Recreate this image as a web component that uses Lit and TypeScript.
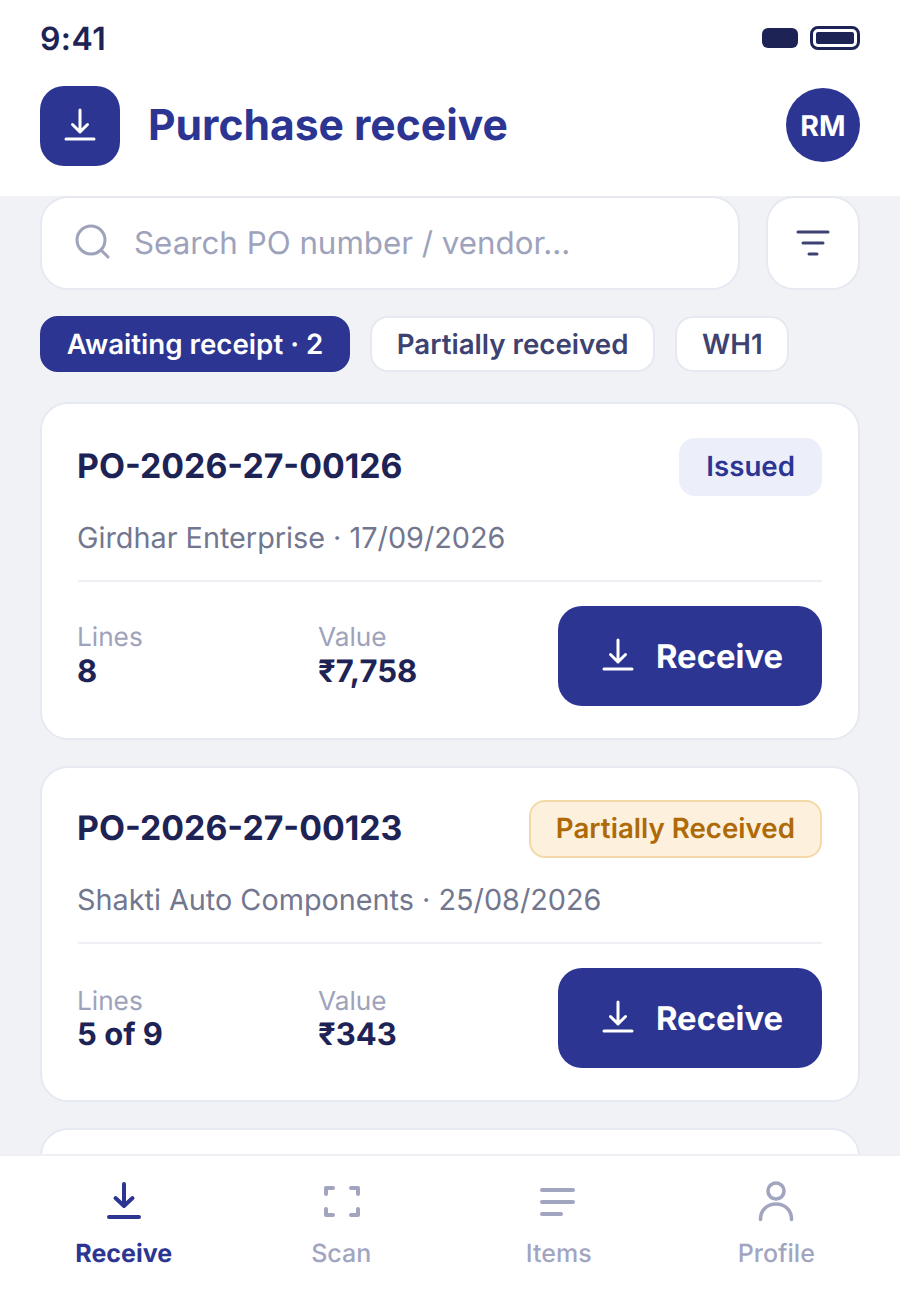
import { LitElement, html, css, svg } from "lit";
import { customElement } from "lit/decorators.js";

const dl = svg`<path d="M18 2V24M10.5 16.5L18 24L25.5 16.5M4 31H32" fill="none" stroke="currentColor" stroke-width="3" stroke-linecap="round" stroke-linejoin="round"/>`;

interface Po { id: string; status: string; tone: string; sub: string; lines: string; value: string }
const pos: Po[] = [
  { id: "PO-2026-27-00126", status: "Issued", tone: "issued", sub: "Girdhar Enterprise · 17/09/2026", lines: "8", value: "₹7,758" },
  { id: "PO-2026-27-00123", status: "Partially Received", tone: "partial", sub: "Shakti Auto Components · 25/08/2026", lines: "5 of 9", value: "₹343" },
];

@customElement("app-root")
export class AppRoot extends LitElement {
  static styles = css`
    :host { display: flex; flex-direction: column; width: 900px; height: 1300px; overflow: hidden; background: #fff; font-family: Inter, "Liberation Sans", sans-serif; color: #1e2356; text-rendering: geometricPrecision; }
    * { box-sizing: border-box; }
    svg { display: block; flex: none; }
    .status { height: 76px; padding: 0 40px; display: flex; align-items: center; justify-content: space-between; }
    .time { font-size: 32px; font-weight: 600; letter-spacing: 0.4px; }
    .status-r { display: flex; align-items: center; gap: 12px; }
    .sig { width: 36px; height: 20px; border-radius: 6px; background: #1e2356; }
    .bat { width: 50px; height: 24px; border: 3px solid #1e2356; border-radius: 8px; padding: 3px; }
    .bat i { display: block; height: 100%; background: #1e2356; border-radius: 2px; }
    .head { height: 120px; padding: 10px 40px 30px; display: flex; align-items: center; gap: 28px; }
    .logo { width: 80px; height: 80px; border-radius: 24px; background: #2c3592; color: #fff; display: flex; align-items: center; justify-content: center; }
    .logo svg { margin-left: -1px; }
    h1 { margin: -1px 0 0; flex: 1; font-size: 42.6px; font-weight: 700; color: #2c3592; }
    .avatar { width: 74px; height: 74px; margin-top: -2px; border-radius: 50%; background: #2c3592; color: #fff; font-size: 28.5px; font-weight: 700; display: flex; align-items: center; justify-content: center; }
    main { flex: 1; min-height: 0; overflow: hidden; background: #f0f2f6; padding: 0 40px; display: flex; flex-direction: column; }
    .search-row { display: flex; gap: 26px; flex: none; }
    .search { width: 700px; height: 94px; background: #fff; border: 2px solid #e7e9f2; border-radius: 28px; padding: 0 32px 0 33px; display: flex; align-items: center; gap: 23px; font-size: 31.3px; color: #9ea2bb; }
    .search svg { margin-top: -2px; }
    .filter { width: 94px; height: 94px; background: #fff; border: 2px solid #e7e9f2; border-radius: 28px; display: flex; align-items: center; justify-content: center; color: #3d4270; }
    .chips { display: flex; gap: 20px; margin-top: 26px; flex: none; }
    .chip { height: 56px; padding: 0 24.75px; border-radius: 18px; background: #fff; border: 2px solid #e7e9f2; color: #3d4270; font-size: 27.7px; font-weight: 600; display: flex; align-items: center; }
    .chip.on { background: #2c3592; border-color: #2c3592; color: #fff; }
    .card { flex: none; background: #fff; border: 2px solid #e7e9f2; border-radius: 28px; padding: 34px 36px 32px; margin-top: 26px; height: 338px; }
    .chips + .card { margin-top: 30px; }
    .card.second { height: 336px; padding-top: 32px; }
    .top { display: flex; align-items: center; justify-content: space-between; height: 58px; }
    .id { font-size: 33.8px; font-weight: 700; margin: -2px 0 0 -1px; }
    .badge { height: 58px; padding: 0 25px 2px; border-radius: 16px; font-size: 27.7px; font-weight: 600; display: flex; align-items: center; border: 2px solid transparent; }
    .issued { background: #eceffa; color: #2c3592; }
    .partial { background: #fdf1dd; color: #ae6a07; border-color: #f3d9a8; }
    .sub { margin: 22px 0 0 -1px; font-size: 28.8px; line-height: 40px; color: #72778f; }
    .rule { height: 2px; background: #eef0f6; margin-top: 22px; }
    .bottom { display: flex; align-items: center; margin-top: 24px; }
    .col { width: 241px; padding-top: 1px; }
    .col:first-child { width: 242px; margin-left: -1px; }
    .second .col { padding-top: 4px; }
    .label { font-size: 26.2px; line-height: 30px; color: #9ea2bb; }
    .num { font-size: 31px; font-weight: 700; line-height: 36px; margin-top: 1px; }
    .second .num { margin-top: 0; }
    .btn { margin-left: auto; width: 264px; height: 100px; padding-left: 3px; border-radius: 24px; background: #2c3592; color: #fff; display: flex; align-items: center; justify-content: center; gap: 20px; font-size: 32.8px; font-weight: 700; flex: none; }
    .tabs { flex: none; height: 146px; background: #fff; border-top: 2px solid #eef0f6; padding: 0 15px; display: grid; grid-template-columns: repeat(4, 1fr); }
    .tab { display: flex; flex-direction: column; align-items: center; padding-top: 24px; color: #a2a5bf; font-size: 25px; font-weight: 500; }
    .tab svg { width: 44px; height: 44px; }
    .tab span { margin-top: 15px; line-height: 30px; }
    .tab.on { color: #2c3592; font-weight: 700; }
  `;

  private card(p: Po, second: boolean) {
    return html`<section class="card ${second ? "second" : ""}">
      <div class="top"><div class="id">${p.id}</div><div class="badge ${p.tone}">${p.status}</div></div>
      <div class="sub">${p.sub}</div>
      <div class="rule"></div>
      <div class="bottom">
        <div class="col"><div class="label">Lines</div><div class="num">${p.lines}</div></div>
        <div class="col"><div class="label">Value</div><div class="num">${p.value}</div></div>
        <div class="btn"><svg width="36" height="36" viewBox="0 0 36 36">${dl}</svg>Receive</div>
      </div>
    </section>`;
  }

  render() {
    return html`
      <div class="status">
        <div class="time">9:41</div>
        <div class="status-r"><div class="sig"></div><div class="bat"><i></i></div></div>
      </div>
      <header class="head">
        <div class="logo"><svg width="36" height="36" viewBox="0 0 36 36">${dl}</svg></div>
        <h1>Purchase receive</h1>
        <div class="avatar">RM</div>
      </header>
      <main>
        <div class="search-row">
          <div class="search">
            <svg width="36" height="36" viewBox="0 0 36 36" fill="none" stroke="currentColor" stroke-width="3" stroke-linecap="round"><circle cx="16" cy="16" r="14"/><path d="M26 26L33 33"/></svg>
            Search PO number / vendor...
          </div>
          <div class="filter">
            <svg width="36" height="28" viewBox="0 0 36 28" fill="none" stroke="currentColor" stroke-width="3" stroke-linecap="round"><path d="M3 3H33M8 14H28M14 25H22"/></svg>
          </div>
        </div>
        <div class="chips">
          <div class="chip on">Awaiting receipt · 2</div>
          <div class="chip">Partially received</div>
          <div class="chip">WH1</div>
        </div>
        ${this.card(pos[0], false)}
        ${this.card(pos[1], true)}
        <section class="card"></section>
      </main>
      <nav class="tabs">
        <div class="tab on"><svg viewBox="0 0 44 44" fill="none" stroke="currentColor" stroke-width="4" stroke-linecap="round" stroke-linejoin="round"><path d="M22 4V26M13.5 18L22 26L30.5 18M7 37H37"/></svg><span>Receive</span></div>
        <div class="tab"><svg viewBox="0 0 44 44" fill="none" stroke="currentColor" stroke-width="4" stroke-linecap="round" stroke-linejoin="round"><path d="M7 14V8H14M32 8H39V14M7 29V35H14M32 35H39V29"/></svg><span>Scan</span></div>
        <div class="tab"><svg viewBox="0 0 44 44" fill="none" stroke="currentColor" stroke-width="4" stroke-linecap="round"><path d="M5 10H36M5 22H36M5 34H24"/></svg><span>Items</span></div>
        <div class="tab"><svg viewBox="0 0 44 44" fill="none" stroke="currentColor" stroke-width="3.6" stroke-linecap="round"><circle cx="22" cy="11" r="8"/><path d="M6.5 39.5C6.5 30 13 24 22 24C31 24 37.5 30 37.5 39.5"/></svg><span>Profile</span></div>
      </nav>
    `;
  }
}
